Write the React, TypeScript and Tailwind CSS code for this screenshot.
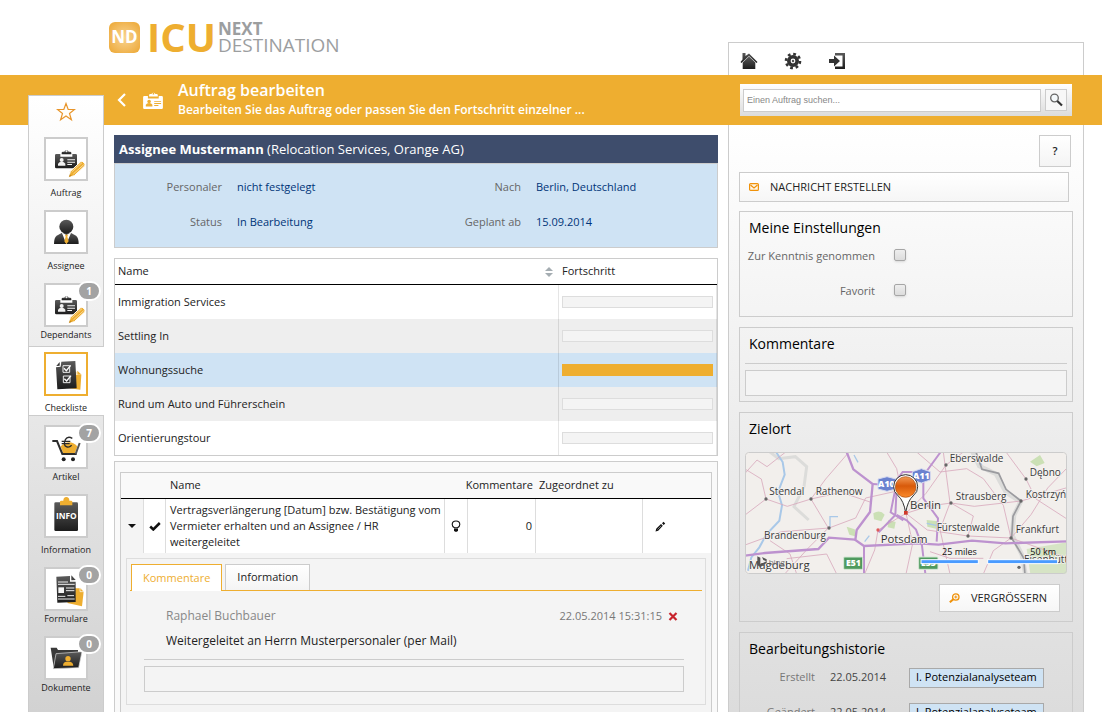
import React from "react";

const LINE = "border-[#cccccc]";

function BadgeShape({ fill, mark }: { fill: string; mark: string }) {
  return (
    <g>
      <path d="M47 46v-5q0-3 4-3h4a7 7 0 0 1 13 0h4q4 0 4 3v5z" fill={fill} />
      <circle cx="61.500" cy="37" r="3" fill={mark} />
      <path d="M27 49q0-4 4-4h12v8h36v-8h10q4 0 4 4v35q0 4-4 4h-58q-4 0-4-4z" fill={fill} />
      <circle cx="47" cy="63" r="6" fill={mark} />
      <path d="M36 80v-6q3-6 11-6t11 6v6z" fill={mark} />
      <path d="M64 61h23v3h-23zM64 68h23v3h-23zM64 75h14v3h-14z" fill={mark} />
    </g>
  );
}

function Defs() {
  return (
    <svg className="absolute size-0" aria-hidden="true">
      <defs>
        <linearGradient id="dark" x1="0" y1="0" x2="0" y2="1">
          <stop offset="0" stopColor="#5a5a5a" />
          <stop offset="1" stopColor="#1c1c1c" />
        </linearGradient>
        <linearGradient id="pin" x1="0" y1="0" x2="0" y2="1">
          <stop offset="0" stopColor="#f39a55" />
          <stop offset="0.45" stopColor="#d85a0a" />
          <stop offset="1" stopColor="#fb8a2c" />
        </linearGradient>
      </defs>
    </svg>
  );
}

function BadgePencil() {
  return (
    <g>
      <BadgeShape fill="url(#dark)" mark="#f2f2f2" />
      <path d="M68 115l5-18 31-29q4-3 7 0l5 6q3 4 0 7l-31 29z" fill="#eeae30" stroke="#fff" strokeWidth="3" />
      <path d="M77 99l31-28M82 105l31-28" stroke="#fff" strokeWidth="1.500" />
      <path d="M69 114l2-8 6 5z" fill="#c5861a" />
    </g>
  );
}

function Person() {
  return (
    <g>
      <path d="M24 96q0-20 8-25l16-9h26l16 9q8 5 8 25z" fill="url(#dark)" />
      <path d="M47 61l14 35 15-35-15 8z" fill="#fff" />
      <path d="M57 68h9l-2 6 4 14-7 8-6-8 4-14z" fill="#eeae30" />
      <circle cx="61" cy="44" r="21" fill="url(#dark)" />
    </g>
  );
}

function CheckSheet() {
  return (
    <g>
      <path d="M82 52l9 1v10h15l-3 44-42-6z" fill="#eeae30" />
      <path d="M94 50l13 12h-13z" fill="#eeae30" />
      <path d="M30 40l14-2 2-15 42-2 4 82-58 3z" fill="url(#dark)" />
      <path d="M31 36l10-12v11z" fill="#333" />
      <path d="M51 35h20v20h-20zM52 66h20v20h-20z" fill="none" stroke="#eee" strokeWidth="3" />
      <path d="M54 43l7 7 13-16M55 74l7 7 13-16" fill="none" stroke="#fff" strokeWidth="4" />
    </g>
  );
}

function Cart() {
  return (
    <g>
      <path d="M44 58q26-24 50 0l-7 20h-36z" fill="#eeae30" />
      <path d="M19 42h14l16 39h43" fill="none" stroke="#2c2c2c" strokeWidth="6" />
      <path d="M101 48l-12 33" fill="none" stroke="#555" strokeWidth="6" />
      <path d="M79 34q-14-8-21 4-7 16 3 21 8 4 16-4M47 43h26M47 50h24" fill="none" stroke="#2a2a2a" strokeWidth="4" />
      <circle cx="53" cy="97" r="6" fill="#222" />
      <circle cx="81" cy="97" r="6" fill="#222" />
    </g>
  );
}

function InfoBoard() {
  return (
    <g>
      <rect x="25" y="19" width="71" height="86" rx="4" fill="url(#dark)" />
      <path d="M42 28V17q0-3 4-3h6q0-11 9-11t9 11h5q4 0 4 3v11z" fill="#eeae30" />
      <text x="61" y="70" textAnchor="middle" fill="#fff" fontSize="25" fontWeight="700" fontFamily="Open Sans, sans-serif">INFO</text>
    </g>
  );
}

function FormSheet() {
  return (
    <g>
      <path d="M84 58h20l9 10-5 44-44-10z" fill="#eeae30" />
      <path d="M102 56l12 12h-12z" fill="#eeae30" stroke="#fff" strokeWidth="2" />
      <path d="M31 23l41-2v17h17v61l-55 2z" fill="url(#dark)" />
      <path d="M76 19l13 14-13 1z" fill="#444" />
      <path d="M36 39h30M36 46h50M60 57h25M60 65h25M36 82h22M36 90h50M64 80h20" stroke="#eee" strokeWidth="3" />
      <rect x="37" y="55" width="17" height="17" fill="#f4f4f4" />
    </g>
  );
}

function Folder() {
  return (
    <g>
      <path d="M14 29h18l4 7h60v15h-64l-9 37z" fill="#3a3a3a" />
      <path d="M30 47l78-6-10 48-76 3z" fill="url(#dark)" stroke="#ddd" strokeWidth="2" />
      <circle cx="66" cy="62" r="8" fill="#eeae30" />
      <path d="M51 83q0-11 9-12h12q9 1 10 12z" fill="#eeae30" />
    </g>
  );
}

type Item = { label: string; icon: React.ReactNode; count?: number; active?: boolean };

const items: Item[] = [
  { label: "Auftrag", icon: <BadgePencil /> },
  { label: "Assignee", icon: <Person /> },
  { label: "Dependants", icon: <BadgePencil />, count: 1 },
  { label: "Checkliste", icon: <CheckSheet />, active: true },
  { label: "Artikel", icon: <Cart />, count: 7 },
  { label: "Information", icon: <InfoBoard /> },
  { label: "Formulare", icon: <FormSheet />, count: 0 },
  { label: "Dokumente", icon: <Folder />, count: 0 },
];

function itemClass(item: Item) {
  if (item.active) return "-mt-px mb-1 -mr-px h-[70px] border-y border-[#cccccc] bg-white pr-px";
  return item.count === undefined ? "h-[73px]" : "h-[69px]";
}

function Sidebar() {
  return (
    <nav className="relative ml-7 -mt-[30px] w-[76px] shrink-0 border-x border-t border-[#cccccc] bg-linear-to-b from-white to-[#d2d2d2]">
      <div className="flex h-9 items-start justify-center pt-1.5">
        <button aria-label="Favorit" className="block">
          <svg width="20" height="20" viewBox="0 0 20 20">
            <path d="M10 1.500l2.200 6h6.300l-5 4 1.900 6.300L10 14l-5.400 3.800L6.500 11.500l-5-4h6.300z" fill="#fffdf8" stroke="#e8952a" strokeWidth="1.200" />
          </svg>
        </button>
      </div>
      <ul>
        {items.map((item) => (
          <li key={item.label} className={itemClass(item)}>
            <a href="#" className="flex flex-col items-center pt-[5px]">
              <span className={`relative block size-11 border-2 bg-white ${item.active ? "border-[#eeae30]" : "border-[#cccccc]"}`}>
                <svg className="size-10" viewBox="0 0 120 120" aria-hidden="true">{item.icon}</svg>
                {item.count !== undefined && (
                  <span className="absolute -top-1 left-[31px] flex h-5 w-6 items-center justify-center rounded-full border-2 border-white bg-[#a3a3a3] text-[10px] font-bold text-white">
                    {item.count}
                  </span>
                )}
              </span>
              <span className={`text-[9px] leading-4 text-[#222] ${item.count === undefined ? "mt-1" : ""}`}>{item.label}</span>
            </a>
          </li>
        ))}
      </ul>
    </nav>
  );
}

function Logo() {
  return (
    <a href="#" className="mb-[22px] ml-[109px] flex items-center" aria-label="ICU Next Destination">
      <span className="flex size-[31px] items-center justify-center rounded-md bg-radial from-[#f8d48e] to-[#eca62a] text-[17px] font-bold text-white">
        ND
      </span>
      <span className="ml-[7px] text-[40px] leading-8 font-bold text-[#eeae30]">ICU</span>
      <span className="ml-0.5 flex flex-col text-[#9c9e9f]">
        <span className="text-[17px] leading-4 font-bold">NEXT</span>
        <span className="text-[19px] leading-4">DESTINATION</span>
      </span>
    </a>
  );
}

function Header() {
  return (
    <header>
      <div className="flex h-[75px] items-end justify-between">
        <Logo />
        <div className={`mr-[18px] flex h-[33px] w-[356px] items-center gap-[26px] border border-b-0 ${LINE} bg-white px-[11px] pt-1`}>
          <button aria-label="Start">
            <svg width="18" height="18" viewBox="0 0 18 18" fill="url(#dark)">
              <path d="M2.500 1h3v3L9 1.500 17.500 10l-1 1L9 4 1.500 11l-1-1 2-2.500z" />
              <path d="M9 4.500l6.300 6V17H2.700v-6.500z" />
            </svg>
          </button>
          <button aria-label="Einstellungen">
            <svg width="18" height="18" viewBox="0 0 18 18">
              <circle cx="9" cy="9" r="7" fill="none" stroke="#333" strokeWidth="2.600" strokeDasharray="2.750 2.748" />
              <circle cx="9" cy="9" r="4.200" fill="none" stroke="#333" strokeWidth="3.600" />
              <circle cx="9" cy="9" r="1.200" fill="#555" />
            </svg>
          </button>
          <button aria-label="Abmelden">
            <svg width="18" height="18" viewBox="0 0 18 18">
              <path d="M7 1h10v16H7v-2.500h7.500v-11H7z" fill="url(#dark)" />
              <path d="M1 7h5V3.500l6 5.500-6 5.500V11H1z" fill="#333" />
            </svg>
          </button>
        </div>
      </div>
      <div className="flex h-[50px] items-center bg-[#eeae30] pr-[30px] text-white">
        <button aria-label="Zurück" className="ml-[117px]">
          <svg width="10" height="14" viewBox="0 0 10 14"><path d="M8 1L2 7l6 6" fill="none" stroke="#fff" strokeWidth="2.200" /></svg>
        </button>
        <svg className="ml-4 shrink-0" width="20" height="18" viewBox="27 28 66 60" aria-hidden="true">
          <BadgeShape fill="#fff" mark="#eeae30" />
        </svg>
        <div className="ml-[15px] min-w-0 flex-1">
          <h1 className="text-[16px] leading-5 font-semibold">Auftrag bearbeiten</h1>
          <p className="truncate text-[12px] leading-5 font-semibold">Bearbeiten Sie das Auftrag oder passen Sie den Fortschritt einzelner ...</p>
        </div>
        <form className="flex h-8 w-[332px] items-center bg-linear-to-b from-white to-[#dcdcdc] px-[3px]">
          <input
            aria-label="Auftrag suchen"
            placeholder="Einen Auftrag suchen..."
            className={`h-[23px] min-w-0 flex-1 border ${LINE} bg-white px-[3px] font-['Liberation_Sans',sans-serif] text-[9px] text-black placeholder:text-[#888]`}
          />
          <button type="button" aria-label="Suchen" className={`mr-0.5 ml-1 flex size-[22px] items-center justify-center border ${LINE} bg-[#f7f7f7]`}>
            <svg width="14" height="14" viewBox="0 0 14 14">
              <circle cx="5.500" cy="5" r="3.800" fill="#f4f8fa" stroke="#666" strokeWidth="1.300" />
              <path d="M8.300 8L13 12.500" stroke="#333" strokeWidth="2.200" />
            </svg>
          </button>
        </form>
      </div>
    </header>
  );
}

function Field({ label, value }: { label: string; value: string }) {
  return (
    <div className="flex h-[35px] items-center">
      <dt className="w-[107px] shrink-0 text-right text-[#666]">{label}</dt>
      <dd className="ml-[15px] text-[#003478]">{value}</dd>
    </div>
  );
}

function Summary() {
  return (
    <section>
      <h2 className="h-7 bg-[#3e4d6c] px-[5px] text-[13px] leading-7 text-white">
        <b>Assignee Mustermann</b> <span className="font-medium">(Relocation Services, Orange AG)</span>
      </h2>
      <dl className={`grid h-[85px] grid-cols-2 content-start border ${LINE} bg-[#cfe3f4] pt-[6px] pr-1`}>
        <Field label="Personaler" value="nicht festgelegt" />
        <Field label="Nach" value="Berlin, Deutschland" />
        <Field label="Status" value="In Bearbeitung" />
        <Field label="Geplant ab" value="15.09.2014" />
      </dl>
    </section>
  );
}

const tasks = [
  { name: "Immigration Services", row: "bg-white" },
  { name: "Settling In", row: "bg-[#eeeeee]" },
  { name: "Wohnungssuche", row: "bg-[#cfe3f4]", done: true },
  { name: "Rund um Auto und Führerschein", row: "bg-[#eeeeee]" },
  { name: "Orientierungstour", row: "bg-white" },
];

function TaskTable() {
  return (
    <div className={`mt-2.5 border ${LINE}`}>
      <table className="w-full table-fixed border-separate border-spacing-0 text-left">
        <colgroup><col /><col className="w-[158px]" /></colgroup>
        <thead>
          <tr className="h-[26px]">
            <th className="border-b border-black px-[3px] font-medium">
              <span className="flex items-center justify-between">
                Name
                <svg className="mr-[3px]" width="8" height="10" viewBox="0 0 8 10" fill="#a5adb2"><path d="M0 4l4-4 4 4zM0 6h8l-4 4z" /></svg>
              </span>
            </th>
            <th className="border-b border-black px-[3px] font-medium">Fortschritt</th>
          </tr>
        </thead>
        <tbody>
          {tasks.map((t) => (
            <tr key={t.name} className={`h-[34px] ${t.row}`}>
              <td className="border-r border-black/10 px-[3px]">{t.name}</td>
              <td className="border-r border-black/10 px-[3px]">
                <div role="progressbar" aria-label={t.name} aria-valuenow={t.done ? 100 : 0} className={`h-3 border ${t.done ? "border-[#eeae30] bg-[#eeae30]" : "border-[#dddddd] bg-[#f4f4f4]"}`} />
              </td>
            </tr>
          ))}
        </tbody>
      </table>
    </div>
  );
}

function Details() {
  return (
    <section className={`mt-[5px] flex-1 border border-b-0 ${LINE} bg-[#f9f9f9] px-[5px] pt-2.5`}>
      <div className={`h-full border border-b-0 ${LINE} bg-[#f4f4f4]`}>
        <table className="w-full table-fixed border-separate border-spacing-0 text-left">
          <colgroup>
            <col className="w-[23px]" /><col className="w-[22px]" /><col /><col className="w-[23px]" />
            <col className="w-[68px]" /><col className="w-[107px]" /><col className="w-[68px]" />
          </colgroup>
          <thead>
            <tr className="h-[26px] bg-[#f9f9f9]">
              <th className="border-b border-black" />
              <th className="border-b border-black" />
              <th className="border-b border-black px-1 font-medium">Name</th>
              <th className="border-b border-black pr-[3px] text-right font-medium whitespace-nowrap" colSpan={2}>Kommentare</th>
              <th className="border-b border-black px-[3px] font-medium">Zugeordnet zu</th>
              <th className="border-b border-black" />
            </tr>
          </thead>
          <tbody>
            <tr className="h-[54px] bg-white">
              <td className="border-r border-[#dddddd] bg-[#f4f4f4]">
                <button aria-label="Details" className="mx-auto block"><svg width="8" height="4" viewBox="0 0 8 4"><path d="M0 0h8L4 4z" fill="#111" /></svg></button>
              </td>
              <td className="border-r border-[#dddddd]">
                <svg className="mx-auto" width="12" height="9" viewBox="0 0 12 9"><path d="M1.200 4.500L4.300 7.500 10.800 1" fill="none" stroke="#111" strokeWidth="2.500" /></svg>
              </td>
              <td className="border-r border-[#dddddd] pl-1 leading-4">
                Vertragsverlängerung [Datum] bzw. Bestätigung vom Vermieter erhalten und an Assignee / HR weitergeleitet
              </td>
              <td className="border-r border-[#dddddd]">
                <svg className="mx-auto" width="10" height="12" viewBox="0 0 10 12">
                  <path d="M3.500 7.800Q1.200 6.500 1.200 4.500 1.200 1 5 1t3.800 3.500Q8.800 6.500 6.500 7.800z" fill="#fff" stroke="#111" strokeWidth="1.100" />
                  <path d="M3 8.500h4v2l-1 1.200H4l-1-1.200z" fill="#111" />
                </svg>
              </td>
              <td className="border-r border-[#dddddd] pr-[3px] text-right">0</td>
              <td className="border-r border-[#dddddd]" />
              <td>
                <button aria-label="Bearbeiten" className="ml-3 block">
                  <svg width="11" height="11" viewBox="0 0 11 11"><path d="M.5 10.500l.7-2.800L6 3l1.800 1.800L3.200 9.800zM7 2.200l1.500-1.400 1.700 1.700L8.700 4z" fill="#111" /><path d="M2.500 8.500l3.700-3.700" stroke="#aaa" strokeWidth=".7" /></svg>
                </button>
              </td>
            </tr>
          </tbody>
        </table>
        <div className="mx-[5px] mt-[5px] border border-[#dddddd] px-[3px] pt-[5px] pb-3">
          <div role="tablist" className="flex items-end gap-[3px] border-b border-[#eeae30] pl-px text-[11px]">
            <button role="tab" aria-selected="true" className="-mb-px h-[27px] border border-b-0 border-[#eeae30] bg-white px-[11px] text-[#eeae30]">Kommentare</button>
            <button role="tab" aria-selected="false" className={`h-[26px] border border-b-0 ${LINE} bg-linear-to-b from-white to-[#f4f4f4] px-[11px]`}>Information</button>
          </div>
          <div className="pr-[18px] pl-[14px]">
            <div className="mt-[15px] flex items-center px-[22px] text-[12px] leading-5 text-[#888]">
              <span className="flex-1">Raphael Buchbauer</span>
              <span className="text-[11px] text-[#777]">22.05.2014 15:31:15</span>
              <button aria-label="Löschen" className="-mr-4 ml-1.5">
                <svg width="10" height="9" viewBox="0 0 10 9"><path d="M1.500 1l7 7M8.500 1l-7 7" stroke="#c8242c" strokeWidth="2.200" /></svg>
              </button>
            </div>
            <p className="mt-[5px] px-[22px] text-[12px] leading-5">Weitergeleitet an Herrn Musterpersonaler (per Mail)</p>
            <div className={`mt-2 border-t ${LINE} pt-1.5`}>
              <input aria-label="Kommentar" className={`block h-[26px] w-full border ${LINE} bg-[#f4f4f4] px-2`} />
            </div>
          </div>
        </div>
      </div>
    </section>
  );
}

function Card({ title, children, className = "" }: { title: string; children: React.ReactNode; className?: string }) {
  return (
    <section className={`shrink-0 border ${LINE} px-[5px] pt-[5px] ${className}`}>
      <h3 className="px-1 text-[14px] leading-[22px] text-black">{title}</h3>
      {children}
    </section>
  );
}

function Toggle({ id, label }: { id: string; label: string }) {
  return (
    <div className="flex h-[35px] items-center">
      <label htmlFor={id} className="w-[130px] text-right text-[#666]">{label}</label>
      <input id={id} type="checkbox" className="mb-1 ml-[19px] size-3 appearance-none rounded-[2px] border border-[#a6a6a6] bg-linear-to-b from-[#eeeeee] to-[#dcdcdc] shadow-sm checked:bg-[#eeae30]" />
    </div>
  );
}

const places: [string, number, number, number, number][] = [
  ["Stendal", 118, 271, 108, 282],
  ["Rathenow", 257, 271, 243, 282],
  ["Eberswalde", 659, 170, 648, 180],
  ["Dębno", 899, 212, 888, 222],
  ["Strausberg", 677, 284, 663, 294],
  ["Kostrzyń", 887, 278, 873, 288],
  ["Brandenburg", 102, 403, 297, 369],
  ["Fürstenwalde", 620, 377, 714, 393],
  ["Frankfurt", 857, 385, 843, 399],
  ["Eisenhütt", 882, 475, 867, 487],
];

function MapView() {
  return (
    <svg className="mt-3 block h-[122px] w-full rounded-[3px]" viewBox="45 141 966 366" preserveAspectRatio="xMidYMid slice" role="img" aria-label="Karte Berlin" fontFamily="Open Sans, sans-serif">
      <rect x="45" y="141" width="966" height="366" fill="#f2efec" />
      <g fill="#cbe0b5">
        <path d="M430 325q20-12 34 4l-10 20-22-6zM900 170l30-20 14 24-24 10zM350 365l24 8 6 22-22-6zM590 345l34 4-6 22-26-6z" />
        <path d="M890 432l121-20v95h-110z" opacity=".7" />
        <path d="M475 345l22 6-4 20-20-4z" />
      </g>
      <g fill="none" stroke="#dcdcda" strokeWidth="14">
        <path d="M728 141l20 42 50 24 30 55 44 28-20 40-6 60 30 60 10 57" />
        <path d="M120 141l26 20 50-6 34 30-8 60-30 60 44 40" strokeWidth="9" />
      </g>
      <g fill="none" stroke="#a9c8e8" strokeWidth="4">
        <path d="M138 141l20 30 6 38-20 52 12 40-8 46-38 40-22 40-24 30-10 40" strokeWidth="6" />
        <path d="M300 369v-34h24M404 410l14-18M372 150l12 22M590 355l28 6M740 165l16 14" />
      </g>
      <g fill="none" stroke="#d9a9bd" strokeWidth="2.500">
        <path d="M45 205l36-40 30 20 56-44M45 330l63-48 64 22 71-22 44-60 70-81M108 282l-14-60-49-30" />
        <path d="M243 282l52 87-60 60-70 77M243 282l90-20 90 30M297 369l80-30 30-60 90-20M45 420l110-40 142-11" />
        <path d="M444 375l-10 60-30 72M444 375l60-36 24-14 60-60 60-85 52-39M528 325l70-22 65-9 70 10 140-16 138-40M528 325l64 50 122 18 129 6 168 60" />
        <path d="M470 141l30 50 28 134 20 90-20 92M560 141l70 60 80-10 50 30 60 80 23 98M640 141l20 153-30 80 30 133M760 507l30-70 53-38 60-70 50-80 58-60" />
        <path d="M320 507l-30-60-120 14M200 507l-20-60-60-40M600 440l60 20 100 0M888 222l-60-81M888 222l30 60 93 60M714 393l16-60-67-39" />
      </g>
      <path d="M738 141l18 52 50 12 22 48 45 35-24 46-4 65 36 60 4 50" fill="none" stroke="#9b9b9f" strokeWidth="5" />
      <g fill="none" stroke="#bd92cf" strokeWidth="7">
        <path d="M350 141l20 52 58 44-8 84-40 54-4 30 26 18 160-8 64 4 100-12 100 8 185-6" />
        <path d="M45 452l60-8 160-12 32-34 78 6" />
        <path d="M402 423v84M428 237l60 4 30-40 70 0 44-60M500 250l-4 80-50 52M500 330l30 16 28 28 18 48 10 84M580 230v50l44 60-4 70M520 346l-38-24 12-60" strokeWidth="6" />
      </g>
      <g fill="#4f9a5e" stroke="#d6e8d6" strokeWidth="3">
        <rect x="341" y="456" width="57" height="37" rx="3" />
        <rect x="566" y="456" width="58" height="37" rx="3" />
      </g>
      <g fill="#6b82cf" stroke="#d5d9f0" strokeWidth="3">
        <path d="M444 222l27-7 27 7v30l-27 7-27-7zM547 200l27-9 27 9v25l-27 9-27-9z" />
      </g>
      <g fill="#fff" fontSize="26" fontWeight="800" textAnchor="middle">
        <text x="370" y="484">E51</text>
        <text x="595" y="484">E55</text>
        <text x="469" y="247">A10</text>
        <text x="574" y="222">A11</text>
      </g>
      {places.map(([name, x, y, cx, cy]) => (
        <g key={name}>
          <circle cx={cx} cy={cy} r="5" fill="#666" />
          <text x={x} y={y} fontSize="30" fill="#3a3a3a" stroke="#f6f4f2" strokeWidth="4" paintOrder="stroke">{name}</text>
        </g>
      ))}
      <circle cx="444" cy="375" r="5" fill="#e05a5a" />
      <g fill="#333" fontSize="34" stroke="#f6f4f2" strokeWidth="4" paintOrder="stroke">
        <text x="452" y="413">Potsdam</text>
        <text x="540" y="313">Berlin</text>
        <text x="57" y="492">Magdeburg</text>
      </g>
      <path d="M82 454l9 4v20l18-9-9-4-4-9 14 7v11l-20 12-8-6z" fill="#555" />
      <text x="116" y="480" fontSize="24" fill="#777">bing</text>
      <g fill="#111" fontSize="27">
        <text x="636" y="449">25 miles</text>
        <text x="901" y="449">50 km</text>
      </g>
      <g fill="#4a9bff" stroke="#fff" strokeWidth="3">
        <rect x="573" y="464" width="172" height="12" />
        <rect x="773" y="464" width="210" height="12" />
      </g>
      <path d="M527 323q-6-36-22-50-15-12-14-28a36 36 0 0 1 72 0q1 16-14 28-16 14-22 50z" fill="#fff" stroke="#333" strokeWidth="3" />
      <circle cx="527" cy="246" r="31" fill="url(#pin)" stroke="#a8480a" strokeWidth="2" />
      <rect x="522" y="318" width="11" height="11" fill="#d03a2a" />
      <rect x="46.500" y="142.500" width="963" height="363" rx="9" fill="none" stroke="#cccccc" strokeWidth="3" />
    </svg>
  );
}

function History({ label, date }: { label: string; date: string }) {
  return (
    <div className="flex h-[35px] items-center">
      <span className="w-[70px] text-right text-[#777]">{label}</span>
      <span className="ml-[15px] w-[79px] text-[#444]">{date}</span>
      <a href="#" className="flex h-5 items-center border border-[#a9a9a9] bg-[#cfe3f4] px-1.5 text-black">I. Potenzialanalyseteam</a>
    </div>
  );
}

function RightColumn() {
  return (
    <aside className={`mr-[18px] ml-2.5 flex w-[356px] shrink-0 flex-col overflow-hidden border-x ${LINE} bg-linear-to-b from-white to-[#dcdcdc] px-2.5 pt-2.5`}>
      <button className={`mr-0.5 size-8 shrink-0 self-end border ${LINE} bg-linear-to-b from-white to-[#f4f4f4] font-semibold`}>?</button>
      <button className={`mt-[5px] mr-1 flex h-[30px] shrink-0 items-center gap-[11px] border ${LINE} bg-linear-to-b from-white to-[#f6f6f6] px-[9px] text-[11px]`}>
        <svg width="10" height="8" viewBox="0 0 10 8"><rect x=".6" y=".6" width="8.800" height="6.800" rx="1" fill="#fff6e6" stroke="#f0920a" strokeWidth="1.200" /><path d="M1.500 2l3.500 3 3.500-3" fill="none" stroke="#f0920a" strokeWidth="1.200" /></svg>
        NACHRICHT ERSTELLEN
      </button>
      <Card title="Meine Einstellungen" className="mt-[9px] pb-[7px]">
        <Toggle id="seen" label="Zur Kenntnis genommen" />
        <Toggle id="fav" label="Favorit" />
      </Card>
      <Card title="Kommentare" className="mt-2.5 pb-[5px]">
        <div className={`mt-2 border-t ${LINE} pt-1.5`}>
          <input aria-label="Kommentar schreiben" className={`block h-[26px] w-full border ${LINE} bg-[#f4f4f4] px-2`} />
        </div>
      </Card>
      <Card title="Zielort" className="mt-2.5 pb-[9px]">
        <MapView />
        <button className={`mt-2.5 mr-[7px] ml-auto flex h-7 items-center gap-[11px] border ${LINE} bg-linear-to-b from-white to-[#f6f6f6] pr-3 pl-[9px] text-[11px]`}>
          <svg width="11" height="10" viewBox="0 0 11 10"><circle cx="6.800" cy="4" r="3.200" fill="none" stroke="#f0920a" strokeWidth="1.300" /><path d="M4.300 6.300L.8 9.300" stroke="#f0920a" strokeWidth="2" /><path d="M5.300 4h3M6.800 2.500v3" stroke="#f0920a" /></svg>
          VERGRÖSSERN
        </button>
      </Card>
      <Card title="Bearbeitungshistorie" className="mt-2.5">
        <History label="Erstellt" date="22.05.2014" />
        <History label="Geändert" date="22.05.2014" />
      </Card>
    </aside>
  );
}

export default function App() {
  return (
    <div className="flex h-screen flex-col overflow-hidden bg-white font-['Open_Sans',sans-serif] text-[11px] text-[#222]">
      <Defs />
      <Header />
      <div className="flex min-h-0 flex-1">
        <Sidebar />
        <main className="ml-2.5 flex min-w-0 flex-1 flex-col pt-2.5">
          <Summary />
          <TaskTable />
          <Details />
        </main>
        <RightColumn />
      </div>
    </div>
  );
}
